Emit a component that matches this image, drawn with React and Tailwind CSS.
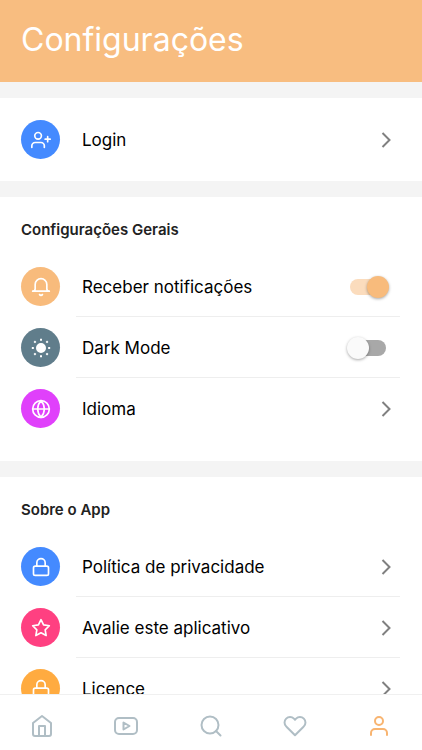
import React, { useState } from "react";

const Icon = ({ className = "w-5 h-5", strokeWidth = 2, children }) => (
  <svg
    className={className}
    viewBox="0 0 24 24"
    fill="none"
    stroke="currentColor"
    strokeWidth={strokeWidth}
    strokeLinecap="round"
    strokeLinejoin="round"
    aria-hidden="true"
  >
    {children}
  </svg>
);

const icons = {
  userPlus: (
    <>
      <path d="M16 21v-2a4 4 0 0 0-4-4H5a4 4 0 0 0-4 4v2" />
      <circle cx="8.5" cy="7" r="4" />
      <path d="M20 8v6M23 11h-6" />
    </>
  ),
  bell: (
    <>
      <path d="M22 17H2a3 3 0 0 0 3-3V9a7 7 0 0 1 14 0v5a3 3 0 0 0 3 3z" />
      <path d="M13.73 21a2 2 0 0 1-3.46 0" />
    </>
  ),
  sun: (
    <>
      <circle cx="12" cy="12" r="5" fill="currentColor" />
      <path
        strokeLinecap="butt"
        strokeWidth="2.4"
        d="M12 1v2.400M12 20.600V23M1 12h2.400M20.600 12H23M3.900 3.900l1.700 1.700M18.400 18.400l1.700 1.700M3.900 20.100l1.700-1.700M18.400 5.600l1.700-1.700"
      />
    </>
  ),
  globe: (
    <>
      <circle cx="12" cy="12" r="10" />
      <path d="M2 12h20M12 2a15.3 15.3 0 0 1 4 10 15.3 15.3 0 0 1-4 10 15.3 15.3 0 0 1-4-10 15.3 15.3 0 0 1 4-10z" />
    </>
  ),
  lock: (
    <>
      <rect x="3" y="11" width="18" height="11" rx="2" />
      <path d="M7 11V7a5 5 0 0 1 10 0v4" />
    </>
  ),
  star: (
    <path d="M12 2l3.09 6.26L22 9.27l-5 4.87 1.18 6.88L12 17.77l-6.18 3.25L7 14.14 2 9.27l6.91-1.01L12 2z" />
  ),
  home: (
    <>
      <path d="M3 9l9-7 9 7v11a2 2 0 0 1-2 2H5a2 2 0 0 1-2-2z" />
      <path d="M9 22V12h6v10" />
    </>
  ),
  video: (
    <>
      <rect x="1" y="4" width="22" height="16" rx="4" />
      <path d="M9.5 8.5v7l6-3.5z" />
    </>
  ),
  search: (
    <>
      <circle cx="11" cy="11" r="8.5" />
      <path d="M21.5 21.5L17 17" />
    </>
  ),
  heart: (
    <path d="M20.84 4.61a5.5 5.5 0 0 0-7.78 0L12 5.67l-1.06-1.06a5.5 5.5 0 0 0-7.78 7.78l1.06 1.06L12 21.23l7.78-7.78 1.06-1.06a5.5 5.5 0 0 0 0-7.78z" />
  ),
  user: (
    <>
      <path d="M20 21v-2a4 4 0 0 0-4-4H8a4 4 0 0 0-4 4v2" />
      <circle cx="12" cy="7" r="4" />
    </>
  ),
};

const Chevron = () => (
  <svg
    className="w-3 h-4 mr-2 shrink-0 text-[#808080]"
    viewBox="0 0 12 16"
    fill="none"
    stroke="currentColor"
    strokeWidth="2"
    aria-hidden="true"
  >
    <path d="M2.5 1l7 7-7 7" />
  </svg>
);

const Badge = ({ icon, color }) => (
  <span className={`w-[39px] h-[39px] shrink-0 rounded-full flex items-center justify-center text-white ${color}`}>
    <Icon>{icons[icon]}</Icon>
  </span>
);

const LinkRow = ({ icon, color, label, divider }) => (
  <li>
    <a href="#" className="flex items-center pl-[21px]">
      <Badge icon={icon} color={color} />
      <span
        className={`ml-4 mr-[22px] pl-1.5 pt-0.5 flex-1 flex items-center justify-between h-[61px] border-b ${
          divider ? "border-[#eeeeee]" : "border-transparent"
        }`}
      >
        <span className="text-[17px] leading-7">{label}</span>
        <Chevron />
      </span>
    </a>
  </li>
);

const SwitchRow = ({ icon, color, label, checked, onChange }) => (
  <li>
    <label className="flex items-center pl-[21px] cursor-pointer">
      <Badge icon={icon} color={color} />
      <span className="ml-4 mr-[22px] pl-1.5 pt-0.5 flex-1 flex items-center justify-between h-[61px] border-b border-[#eeeeee]">
        <span className="text-[17px] leading-7">{label}</span>
        <span className="relative w-[43px] h-[22px] mr-[11px] shrink-0">
          <input
            type="checkbox"
            role="switch"
            className="peer sr-only"
            checked={checked}
            onChange={(e) => onChange(e.target.checked)}
          />
          <span className="absolute left-1 right-[3px] top-[3px] h-4 rounded-full bg-[#a8a8a8] peer-checked:bg-[#fbdcbd]" />
          <span className="absolute left-px top-0 w-[22px] h-[22px] rounded-full bg-[#fafafa] shadow-[0_1px_3px_rgba(0,0,0,0.35)] transition-transform peer-checked:translate-x-5 peer-checked:bg-[#f8bb7c]" />
        </span>
      </span>
    </label>
  </li>
);

const Section = ({ title, children }) => (
  <section className="bg-white pt-[19px] pb-[22px]">
    <h2 className="px-[21px] mb-3 text-[15px] leading-7 font-semibold text-[#222222]">{title}</h2>
    <ul>{children}</ul>
  </section>
);

const tabs = [
  { icon: "home", label: "Início" },
  { icon: "video", label: "Vídeos" },
  { icon: "search", label: "Buscar" },
  { icon: "heart", label: "Favoritos" },
  { icon: "user", label: "Perfil" },
];

const App = () => {
  const [notifications, setNotifications] = useState(true);
  const [darkMode, setDarkMode] = useState(false);
  const [activeTab, setActiveTab] = useState("user");

  return (
    <div className="h-dvh flex flex-col bg-[#f4f4f4] text-black font-['Inter',sans-serif]">
      <main className="flex-1 min-h-0 overflow-y-auto [scrollbar-width:none]">
        <header className="bg-[#f8bd80] px-[21px] pt-4 pb-[18px]">
          <h1 className="text-[32px] leading-[48px] text-white">Configurações</h1>
        </header>

        <div className="mt-4 flex flex-col gap-4">
          <ul className="bg-white py-[11px]">
            <LinkRow icon="userPlus" color="bg-[#448aff]" label="Login" />
          </ul>

          <Section title="Configurações Gerais">
            <SwitchRow
              icon="bell"
              color="bg-[#f8bb7c]"
              label="Receber notificações"
              checked={notifications}
              onChange={setNotifications}
            />
            <SwitchRow
              icon="sun"
              color="bg-[#607d8b]"
              label="Dark Mode"
              checked={darkMode}
              onChange={setDarkMode}
            />
            <LinkRow icon="globe" color="bg-[#e040fb]" label="Idioma" />
          </Section>

          <Section title="Sobre o App">
            <LinkRow icon="lock" color="bg-[#448aff]" label="Política de privacidade" divider />
            <LinkRow icon="star" color="bg-[#ff4081]" label="Avalie este aplicativo" divider />
            <LinkRow icon="lock" color="bg-[#ffab40]" label="Licence" />
          </Section>
        </div>
      </main>

      {/* Bottom navigation */}
      <nav className="flex shrink-0 pr-px bg-white border-t border-[#f0f0f0]">
        {tabs.map((tab) => (
          <button
            key={tab.icon}
            type="button"
            aria-label={tab.label}
            onClick={() => setActiveTab(tab.icon)}
            className={`flex-1 flex justify-center pt-[19px] pb-3 ${
              activeTab === tab.icon ? "text-[#f8b470]" : "text-[#b0bec5]"
            }`}
          >
            <Icon className="w-6 h-6">{icons[tab.icon]}</Icon>
          </button>
        ))}
      </nav>
    </div>
  );
};

export default App;
